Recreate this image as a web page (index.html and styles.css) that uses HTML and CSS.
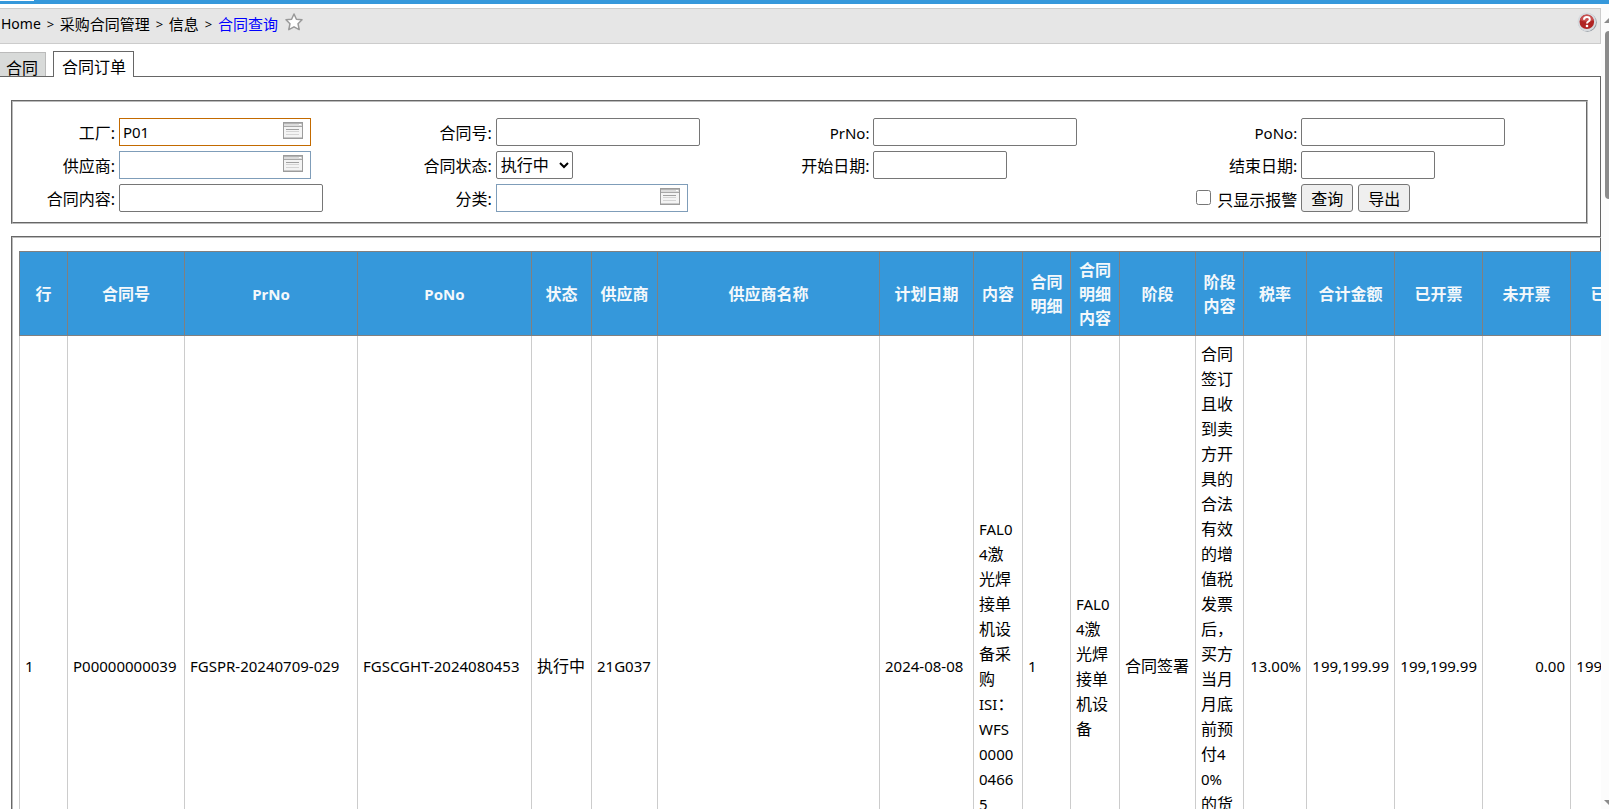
FILE: index.html
```html
<!DOCTYPE html>
<html lang="zh-CN">
<head>
<meta charset="utf-8">
<title>合同查询</title>
<link rel="stylesheet" href="styles.css">
</head>
<body>
<svg width="0" height="0" class="defs" aria-hidden="true">
  <symbol id="lookup" viewBox="0 0 20 17">
    <rect x="0.5" y="0.5" width="19" height="16" fill="#f4f4f4" stroke="#9c9c9c"/>
    <rect x="1" y="1" width="18" height="3" fill="#dcdcdc"/>
    <path d="M1 1.500H19" stroke="#b4b4b4"/>
    <path d="M1 4.500H19" stroke="#a8a8a8"/>
    <path d="M16 2.500H18" stroke="#fff"/>
    <path d="M3 7.500H16" stroke="#a0a0a0"/>
    <path d="M3 9.500H16M3 12.500H16" stroke="#d4d4d4"/>
    <path d="M1 15.500H19" stroke="#c8c8c8"/>
  </symbol>
</svg>
<div class="topbar"><span class="topbar-tab"></span></div>
<div class="frame">
  <div class="page">
    <nav class="crumbs">
      <a class="latin" href="#">Home</a><span class="sep">&gt;</span><a href="#">采购合同管理</a><span class="sep">&gt;</span><a href="#">信息</a><span class="sep">&gt;</span><a class="current" href="#">合同查询</a>
      <button class="icon-btn star" type="button" aria-label="收藏">
        <svg width="18" height="18" viewBox="0 0 18 18"><path d="M9 1L11.400 6.200L17 6.800L13 10.700L14.200 16.600L9 13.800L3.800 16.600L5 10.700L1 6.800L6.600 6.200Z" fill="#fff" stroke="#999" stroke-width="1.500" stroke-linejoin="round"/></svg>
      </button>
      <button class="icon-btn help" type="button" aria-label="帮助">
        <svg width="20" height="20" viewBox="0 0 20 20"><circle cx="10.500" cy="10.500" r="9.300" fill="#8f979f"/><circle cx="9.800" cy="9.800" r="9.300" fill="#d6dade"/><circle cx="9.800" cy="9.800" r="7.300" fill="#b02424"/><path d="M3 8A7 7 0 0 1 16.600 8Q10 11 3 8Z" fill="#c85050"/><path d="M7 7.700Q7 5 9.900 5Q12.800 5 12.800 7.400Q12.800 8.800 11.200 9.600Q10 10.200 10 11.500" fill="none" stroke="#fff" stroke-width="2"/><circle cx="10" cy="14" r="1.300" fill="#fff"/></svg>
      </button>
    </nav>
    <div class="tabs" role="tablist">
      <button class="tab" type="button" role="tab">合同</button>
      <button class="tab active" type="button" role="tab" aria-selected="true">合同订单</button>
    </div>
    <main class="panel">
      <form class="box filters">
        <label for="plant">工厂:</label>
        <div class="lookup focus"><input id="plant" type="text" value="P01"><button type="button" aria-label="选择工厂"><svg width="20" height="17"><use href="#lookup"/></svg></button></div>
        <label for="contract">合同号:</label>
        <input class="text" id="contract" type="text">
        <label class="latin" for="prno">PrNo:</label>
        <input class="text" id="prno" type="text">
        <label class="latin" for="pono">PoNo:</label>
        <input class="text" id="pono" type="text">

        <label for="vendor">供应商:</label>
        <div class="lookup"><input id="vendor" type="text"><button type="button" aria-label="选择供应商"><svg width="20" height="17"><use href="#lookup"/></svg></button></div>
        <label for="status">合同状态:</label>
        <select id="status"><option>执行中</option></select>
        <label for="from">开始日期:</label>
        <input class="text date" id="from" type="text">
        <label for="to">结束日期:</label>
        <input class="text date" id="to" type="text">

        <label for="content">合同内容:</label>
        <input class="text" id="content" type="text">
        <label for="category">分类:</label>
        <div class="lookup"><input id="category" type="text"><button type="button" aria-label="选择分类"><svg width="20" height="17"><use href="#lookup"/></svg></button></div>
        <div class="alarm"><input id="alarm" type="checkbox"><label for="alarm">只显示报警</label></div>
        <div class="actions"><button type="button">查询</button><button type="button">导出</button></div>
      </form>
      <section class="box results">
        <table>
          <colgroup>
            <col class="w48"><col class="w117"><col class="w173"><col class="w174"><col class="w60"><col class="w66"><col class="w222"><col class="w94"><col class="w49"><col class="w48"><col class="w49"><col class="w76"><col class="w48"><col class="w63"><col class="w88"><col class="w88"><col class="w88"><col class="w88">
          </colgroup>
          <thead>
            <tr>
              <th>行</th><th>合同号</th><th class="latin">PrNo</th><th class="latin">PoNo</th><th>状态</th><th>供应商</th><th>供应商名称</th><th>计划日期</th><th>内容</th><th>合同<br>明细</th><th>合同<br>明细<br>内容</th><th>阶段</th><th>阶段<br>内容</th><th>税率</th><th>合计金额</th><th>已开票</th><th>未开票</th><th>已付款</th>
            </tr>
          </thead>
          <tbody>
            <tr>
              <td class="latin">1</td>
              <td class="latin">P00000000039</td>
              <td class="latin">FGSPR-20240709-029</td>
              <td class="latin">FGSCGHT-2024080453</td>
              <td>执行中</td>
              <td class="latin">21G037</td>
              <td></td>
              <td class="latin">2024-08-08</td>
              <td><span class="latin">FAL0<br>4</span>激<br>光焊<br>接单<br>机设<br>备采<br>购<br><span class="latin">ISI</span>：<br><span class="latin">WFS<br>0000<br>0466<br>5</span></td>
              <td class="latin">1</td>
              <td><span class="latin">FAL0<br>4</span>激<br>光焊<br>接单<br>机设<br>备</td>
              <td>合同签署</td>
              <td class="long">合同<br>签订<br>且收<br>到卖<br>方开<br>具的<br>合法<br>有效<br>的增<br>值税<br>发票<br>后，<br>买方<br>当月<br>月底<br>前预<br>付<span class="latin">4<br>0%</span><br>的货</td>
              <td class="latin num">13.00%</td>
              <td class="latin num">199,199.99</td>
              <td class="latin num">199,199.99</td>
              <td class="latin num">0.00</td>
              <td class="latin num">199,199.99</td>
            </tr>
          </tbody>
        </table>
      </section>
    </main>
  </div>
  <div class="scrollbar" aria-hidden="true">
    <span class="arrow up"></span>
    <span class="thumb"></span>
    <span class="arrow down"></span>
  </div>
</div>
</body>
</html>
```
FILE: styles.css
```css
* { box-sizing: border-box; }

body {
  margin: 0;
  height: 100vh;
  display: flex;
  flex-direction: column;
  overflow: hidden;
  background: #fff;
  color: #000;
  font: 16px/24px "Noto Sans", "Noto Sans CJK SC", sans-serif;
}

input, select, button { font: inherit; color: inherit; margin: 0; }
.defs { position: absolute; }
.latin { font-size: 15px; }

.topbar { flex: none; height: 4px; background: #3598db; }
.topbar-tab { display: block; width: 34px; height: 1px; background: #fff; }

.frame { flex: 1; min-height: 0; display: flex; }
.page {
  flex: 1;
  min-width: 0;
  overflow: hidden;
  display: flex;
  flex-direction: column;
  padding-top: 4px;
}

/* breadcrumb */
.crumbs {
  flex: none;
  height: 36px;
  display: flex;
  align-items: flex-start;
  padding: 3px 3px 0 1px;
  border: 1px solid #ccc;
  border-left: 0;
  background: #e6e6e6;
  font-size: 15px;
}
.crumbs a { color: #000; text-decoration: none; }
.crumbs .latin { font-size: 14px; }
.crumbs .current { color: #00f; }
.sep { width: 19px; text-align: center; font-size: 13px; }
.icon-btn { padding: 0; border: 0; background: none; line-height: 0; }
.star { margin: 1px 0 0 7px; }
.help { margin-left: auto; }

/* tabs */
.tabs { flex: none; display: flex; align-items: flex-end; gap: 7px; height: 32px; }
.tab {
  display: flex;
  height: 24px;
  padding: 3px 7px 0 6px;
  border: 1px solid #bbb;
  border-width: 1px 1px 0 0;
  background: #d8dad9;
  line-height: 24px;
}
.tab.active {
  position: relative;
  height: 26px;
  margin-bottom: -1px;
  padding: 3px 7px 0 8px;
  border: 1px solid #666;
  border-bottom: 0;
  background: #fff;
}

.panel {
  flex: 1;
  min-height: 0;
  display: flex;
  flex-direction: column;
  gap: 12px;
  padding: 23px 12px 0 11px;
  border: 1px solid #666;
  border-left: 0;
  border-bottom: 0;
}
.box { flex: none; border: 2px groove #bbb; }

/* filters */
.filters {
  display: grid;
  grid-template-columns: 102fr 277fr 92fr 278fr 92fr 280fr 140fr 285fr;
  column-gap: 4px;
  row-gap: 5px;
  align-items: center;
  padding: 16px 0 10px;
}
.filters > * { min-width: 0; }
.filters > label { padding-top: 2px; text-align: right; }
.text {
  width: 204px;
  height: 28px;
  padding: 0 4px;
  border: 1px solid #767676;
  border-radius: 2px;
}
.date { width: 134px; }
.lookup {
  display: flex;
  align-items: flex-start;
  width: 192px;
  height: 28px;
  padding-right: 7px;
  border: 1px solid #7f9db9;
}
.lookup.focus { border-color: #c36a00; }
.lookup input {
  flex: 1;
  min-width: 0;
  height: 26px;
  padding: 0 3px;
  border: 0;
  outline: 0;
  background: none;
  font-size: 15px;
}
.lookup button { padding: 3px 0 0; border: 0; background: none; line-height: 0; }
select {
  width: 77px;
  height: 28px;
  border: 1px solid #767676;
  border-radius: 2px;
  background: #fff;
}
.alarm {
  grid-column: 5 / 8;
  display: flex;
  justify-content: flex-end;
  align-items: center;
  gap: 6px;
}
.alarm input { width: 15px; height: 15px; margin-bottom: 2px; }
.alarm label { padding-top: 4px; }
.actions { display: flex; gap: 5px; }
.actions button {
  width: 52px;
  height: 28px;
  padding: 1px 0 0;
  border: 1px solid #767676;
  border-radius: 3px;
  background: #efefef;
}

/* results */
.results {
  width: max-content;
  padding: 13px 6px 0;
}
table { width: 1640px; table-layout: fixed; border-collapse: collapse; background: #fff; }
th {
  height: 84px;
  padding: 5px 0;
  border: 1px solid #808080;
  background: #3598db;
  color: #f4f8fb;
  font-weight: 700;
}
td {
  height: 662px;
  padding: 6px 5px;
  border: 1px solid #ccc;
  line-height: 25px;
  white-space: nowrap;
  vertical-align: middle;
}
.long { vertical-align: top; }
.num { text-align: right; }

.w48 { width: 48px; }
.w49 { width: 49px; }
.w60 { width: 60px; }
.w63 { width: 63px; }
.w66 { width: 66px; }
.w76 { width: 76px; }
.w88 { width: 88px; }
.w94 { width: 94px; }
.w117 { width: 117px; }
.w173 { width: 173px; }
.w174 { width: 174px; }
.w222 { width: 222px; }

/* scrollbar at the window edge */
.scrollbar {
  flex: none;
  width: 8px;
  display: flex;
  flex-direction: column;
  align-items: flex-end;
  overflow: hidden;
  padding: 14px 0 4px;
  background: #fcfcfc;
}
.arrow { width: 5px; height: 5px; background: #8b8b8b; }
.up { clip-path: polygon(100% 0, 100% 100%, 0 100%); }
.down { margin-top: auto; clip-path: polygon(0 0, 100% 0, 100% 100%); }
.thumb { width: 4px; height: 168px; margin-top: 8px; border-radius: 4px 0 0 4px; background: #8b8b8b; }
```
